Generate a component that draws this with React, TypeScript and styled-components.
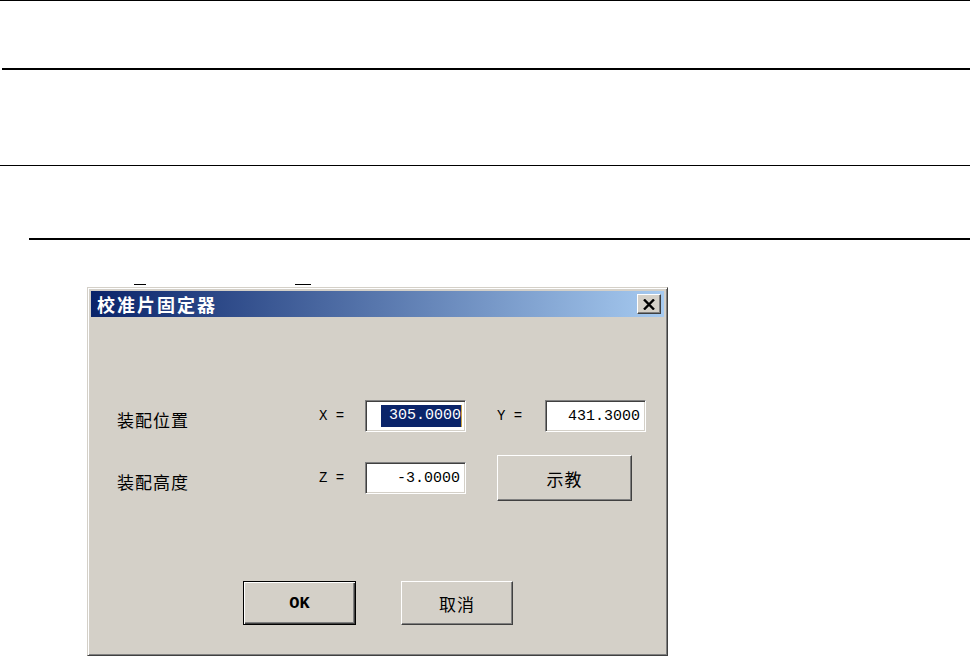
import React from "react";
import styled, { createGlobalStyle } from "styled-components";

const Global = createGlobalStyle`
  html, body { margin: 0; padding: 0; background: #fff; }
  body { font-family: "Noto Sans CJK SC", "Noto Sans", sans-serif; }
`;

const Page = styled.div`
  display: flex;
  flex-direction: column;
  width: 970px;
  height: 656px;
  overflow: hidden;
  background: #fff;
`;

const Rule = styled.div<{ $gap: number; $thick: number; $indent: number }>`
  margin-top: ${(p) => p.$gap}px;
  margin-left: ${(p) => p.$indent}px;
  height: ${(p) => p.$thick}px;
  background: #000;
  flex-shrink: 0;
`;

const DashRow = styled.div`
  display: flex;
  margin-top: 44px;
  height: 2px;
  flex-shrink: 0;
`;

const Dash = styled.span<{ $offset: number; $w: number }>`
  margin-left: ${(p) => p.$offset}px;
  width: ${(p) => p.$w}px;
  height: 1px;
  background: #000;
`;

const Dialog = styled.div`
  margin: 1px 0 0 87px;
  width: 581px;
  height: 369px;
  box-sizing: border-box;
  background: #d4d0c8;
  border: 1px solid;
  border-color: #d4d0c8 #404040 #404040 #d4d0c8;
  box-shadow: inset 1px 1px #fff, inset -1px -1px #808080;
  padding: 3px;
  display: flex;
  flex-direction: column;
  flex-shrink: 0;
`;

const TitleBar = styled.div`
  height: 26px;
  display: flex;
  align-items: center;
  justify-content: space-between;
  padding: 0 3px 0 6px;
  background: linear-gradient(to right, #0a246a, #a6caf0);
`;

const Title = styled.span`
  color: #fff;
  font-weight: bold;
  font-size: 18px;
  letter-spacing: 2px;
  line-height: 1;
`;

const CloseButton = styled.div`
  width: 24px;
  height: 20px;
  box-sizing: border-box;
  background: #d4d0c8;
  border: 1px solid;
  border-color: #fff #404040 #404040 #fff;
  box-shadow: inset -1px -1px #808080;
  display: flex;
  align-items: center;
  justify-content: center;
`;

const Client = styled.div`
  flex: 1;
  display: flex;
  flex-direction: column;
  padding: 83px 0 0 26px;
`;

const FormGrid = styled.div`
  display: grid;
  grid-template-columns: 202px 46px 101px 31px 48px 101px;
  grid-template-rows: 32px 46px;
  row-gap: 23px;
  align-items: center;
`;

const Label = styled.span`
  font-size: 17px;
  letter-spacing: 1px;
  line-height: 1;
  color: #000;
  padding-top: 6px;
`;

const Axis = styled.span`
  font-family: "Liberation Mono", monospace;
  font-size: 14px;
  color: #000;
  white-space: pre;
`;

const Field = styled.div`
  width: 101px;
  height: 32px;
  box-sizing: border-box;
  background: #fff;
  border: 1px solid;
  border-color: #808080 #fff #fff #808080;
  box-shadow: inset 1px 1px #404040, inset -1px -1px #d4d0c8;
  display: flex;
  align-items: center;
  justify-content: flex-end;
  padding-right: 5px;
  overflow: hidden;
  font-family: "Liberation Mono", monospace;
  font-size: 15px;
  color: #000;
`;

const Selected = styled.span`
  background: #0a246a;
  color: #fff;
  line-height: 22px;
  padding-left: 8px;
  border-right: 1px solid #c8a040;
  margin-right: -2px;
  white-space: nowrap;
`;

const Button = styled.div<{ $w: number; $h: number; $default?: boolean }>`
  width: ${(p) => p.$w}px;
  height: ${(p) => p.$h}px;
  box-sizing: border-box;
  background: #d4d0c8;
  display: flex;
  align-items: center;
  justify-content: center;
  border: 1px solid;
  border-color: ${(p) => (p.$default ? "#000" : "#fff #404040 #404040 #fff")};
  box-shadow: ${(p) =>
    p.$default
      ? "inset 1px 1px #fff, inset -1px -1px #404040, inset -2px -2px #808080"
      : "inset -1px -1px #808080"};
  font-size: 17px;
  letter-spacing: 1px;
  color: #000;
`;

const OkText = styled.span`
  font-family: "Liberation Mono", monospace;
  font-weight: bold;
  font-size: 17px;
  letter-spacing: 0;
`;

const TeachCell = styled.div`
  grid-column: 5 / span 2;
`;

const ButtonRow = styled.div`
  display: flex;
  gap: 45px;
  margin-top: 80px;
  padding-left: 126px;
`;

const CloseIcon = () => (
  <svg width="12" height="11" viewBox="0 0 12 11">
    <path d="M1 0.5 L11 10.5 M11 0.5 L1 10.5" stroke="#000" strokeWidth="2.4" />
  </svg>
);

export default function App() {
  return (
    <>
      <Global />
      <Page>
        <Rule $gap={0} $thick={1} $indent={0} />
        <Rule $gap={67} $thick={2} $indent={2} />
        <Rule $gap={95} $thick={1} $indent={0} />
        <Rule $gap={72} $thick={2} $indent={29} />
        <DashRow>
          <Dash $offset={134} $w={12} />
          <Dash $offset={149} $w={16} />
        </DashRow>
        <Dialog>
          <TitleBar>
            <Title>校准片固定器</Title>
            <CloseButton>
              <CloseIcon />
            </CloseButton>
          </TitleBar>
          <Client>
            <FormGrid>
              <Label>装配位置</Label>
              <Axis>X =</Axis>
              <Field>
                <Selected>305.0000</Selected>
              </Field>
              <span />
              <Axis>Y =</Axis>
              <Field>431.3000</Field>

              <Label>装配高度</Label>
              <Axis>Z =</Axis>
              <Field>-3.0000</Field>
              <span />
              <TeachCell>
                <Button $w={135} $h={46}>示教</Button>
              </TeachCell>
            </FormGrid>
            <ButtonRow>
              <Button $w={113} $h={44} $default>
                <OkText>OK</OkText>
              </Button>
              <Button $w={112} $h={44}>取消</Button>
            </ButtonRow>
          </Client>
        </Dialog>
      </Page>
    </>
  );
}
